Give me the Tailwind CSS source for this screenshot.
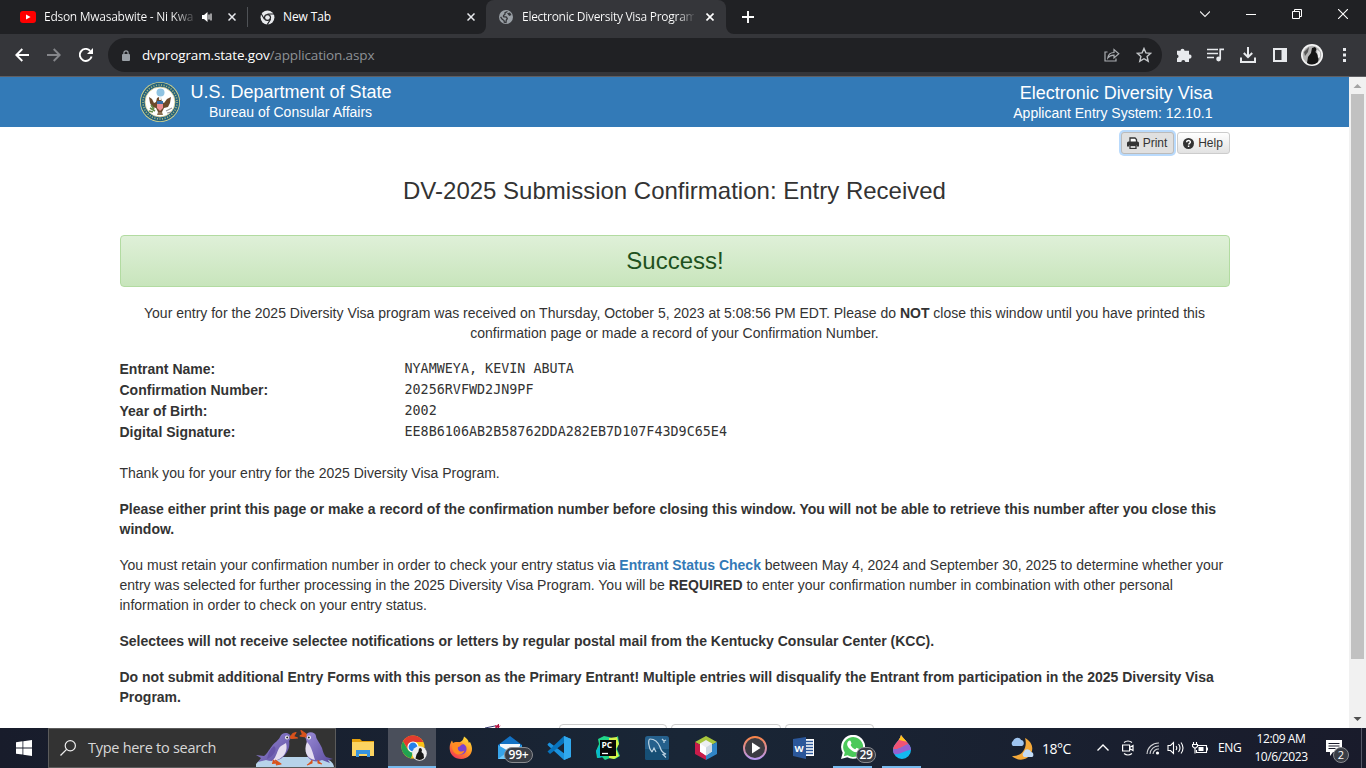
<!DOCTYPE html>
<html lang="en">
<head>
<meta charset="utf-8">
<title>Electronic Diversity Visa Program</title>
<script src="https://cdn.jsdelivr.net/npm/@tailwindcss/browser@4"></script>
</head>
<body class="w-[1366px] h-[768px] overflow-hidden flex flex-col bg-white font-['Open_Sans','Noto_Sans',sans-serif]">

<!-- Tab strip -->
<header class="h-[34px] shrink-0 bg-[#202124] flex items-start text-white text-[12px]">
  <div class="w-[247px] h-[34px] flex items-center pl-5">
    <svg class="w-4 h-3 shrink-0" viewBox="0 0 16 12"><rect width="16" height="12" rx="3" fill="#f00"/><path d="M6 3.4v5.2L10.6 6z" fill="#fff"/></svg>
    <span class="ml-2 w-[149px] whitespace-nowrap tracking-[-0.27px] leading-[34px] bg-linear-to-r from-white from-86% to-white/20 bg-clip-text text-transparent">Edson Mwasabwite - Ni Kwa</span>
    <svg class="ml-2 w-3 h-3 shrink-0" viewBox="0 0 12 12"><path d="M1 4h2l3.500-3v10L3 8H1z" fill="#fff"/><path d="M8 3.500v5M10 2.500v7" stroke="#fff" stroke-width="1.100"/></svg>
    <svg class="ml-[15px] w-2 h-2 shrink-0" viewBox="0 0 8 8"><path d="M.5.5l7 7m0-7l-7 7" stroke="#e8eaed" stroke-width="1.500"/></svg>
  </div>
  <div class="w-px h-5 mt-[7px] bg-[#4f5256]"></div>
  <div class="w-[238px] h-[34px] flex items-center pl-3">
    <svg class="w-[15px] h-[15px]" viewBox="0 0 16 16"><circle cx="8" cy="8" r="7.400" fill="#e8eaed"/><circle cx="8" cy="8" r="3.800" fill="#202124"/><circle cx="8" cy="8" r="2.500" fill="#e8eaed"/><path d="M8 4.200h7M4.700 9.900L1.300 4M11.300 9.900L7.700 15.600" stroke="#202124" stroke-width="1.200"/></svg>
    <span class="ml-2 tracking-[-0.1px]">New Tab</span>
    <svg class="ml-auto mr-[11px] w-2 h-2" viewBox="0 0 8 8"><path d="M.5.5l7 7m0-7l-7 7" stroke="#e8eaed" stroke-width="1.500"/></svg>
  </div>
  <div class="relative w-[240px] h-[34px] rounded-t-lg bg-[#35363a] flex items-center pl-[13px]">
    <svg class="absolute bottom-0 -left-2 w-2 h-2" viewBox="0 0 8 8"><path d="M8 0v8H0a8 8 0 0 0 8-8z" fill="#35363a"/></svg>
    <svg class="absolute bottom-0 -right-2 w-2 h-2" viewBox="0 0 8 8"><path d="M0 0v8h8a8 8 0 0 1-8-8z" fill="#35363a"/></svg>
    <svg class="w-[14px] h-[14px] shrink-0" viewBox="0 0 14 14"><circle cx="7" cy="7" r="7" fill="#9aa0a6"/><path d="M8.500 1.500L6 2.700v1.600L4.500 5.500v1.200l3 .5.800 1.500-1 1.300-.3 2.500-1.700-.3L5 10.500 3 9 1.600 6.800" fill="none" stroke="#35363a" stroke-width="1.300"/><path d="M8 3.200l3-.6 1.500 2.400-2.300 1z" fill="#35363a"/></svg>
    <span class="ml-[9px] w-[172px] overflow-x-clip whitespace-nowrap tracking-[-0.28px] leading-[34px] bg-linear-to-r from-white from-90% to-white/10 bg-clip-text text-transparent">Electronic Diversity Visa Program</span>
    <svg class="ml-[12px] w-2 h-2 shrink-0" viewBox="0 0 8 8"><path d="M.5.5l7 7m0-7l-7 7" stroke="#fff" stroke-width="1.600"/></svg>
  </div>
  <svg class="ml-4 mt-[11px] w-3 h-3" viewBox="0 0 12 12"><path d="M6 0v12M0 6h12" stroke="#fff" stroke-width="1.900"/></svg>
  <div class="ml-auto flex items-center h-[28px] gap-[36px] pr-[18px]">
    <svg class="w-[10px] h-[10px]" viewBox="0 0 10 10"><path d="M0 2.500l5 5 5-5" fill="none" stroke="#eee" stroke-width="1.100"/></svg>
    <svg class="w-[10px] h-[10px]" viewBox="0 0 10 10"><path d="M0 5.500h10" stroke="#fff" stroke-width="1"/></svg>
    <svg class="w-[10px] h-[10px]" viewBox="0 0 10 10"><path d="M.5 2.500h7v7h-7zM2.500 2.500v-2h7v7h-2" fill="none" stroke="#fff" stroke-width="1"/></svg>
    <svg class="w-[10px] h-[10px]" viewBox="0 0 10 10"><path d="M0 0l10 10M10 0L0 10" stroke="#fff" stroke-width="1.100"/></svg>
  </div>
</header>

<!-- Toolbar -->
<nav class="h-[43px] shrink-0 bg-[#35363a] border-b border-[#5f5f63] flex items-center">
  <svg class="ml-[15px] w-[14px] h-[14px]" viewBox="0 0 14 14"><path d="M14 7H1.500M7.300 1L1.300 7l6 6" fill="none" stroke="#fff" stroke-width="1.900"/></svg>
  <svg class="ml-[18px] w-[14px] h-[14px]" viewBox="0 0 14 14"><path d="M0 7h12.500M6.700 1l6 6-6 6" fill="none" stroke="#85868a" stroke-width="1.900"/></svg>
  <svg class="ml-[18px] w-[14px] h-[14px]" viewBox="0 0 14 14"><path d="M12.600 8.500A6 6 0 1 1 11.200 2.800" fill="none" stroke="#fff" stroke-width="1.900"/><path d="M14 0v6H8z" fill="#fff"/></svg>
  <div class="ml-[15px] w-[1054px] h-[34px] rounded-full bg-[#202124] flex items-center pl-[14px] pr-[10px]">
    <svg class="w-2 h-[11px]" viewBox="0 0 8 11"><rect y="4" width="8" height="7" rx="1" fill="#9aa0a6"/><path d="M1.900 4.500V3a2.100 2.100 0 0 1 4.200 0v1.500" fill="none" stroke="#9aa0a6" stroke-width="1.200"/></svg>
    <span class="ml-3 text-[13.500px] text-white whitespace-nowrap tracking-[-0.14px]">dvprogram.state.gov<span class="text-[#8e9196]">/application.aspx</span></span>
    <svg class="ml-auto w-[16px] h-[14px]" viewBox="0 0 16 14"><path d="M3.500 4H1v9h11v-2.500M3.800 10c.4-3.600 2.700-5.400 6.200-5.500V1.500L14.800 5.800 10 10V7.200C7 7.200 5.300 8 3.800 10z" fill="none" stroke="#aaadb1" stroke-width="1.200"/></svg>
    <svg class="ml-4 w-[16px] h-[16px]" viewBox="0 0 16 16"><path d="M8 1.500l1.900 4.400 4.800.4-3.600 3.200 1.100 4.700L8 11.700l-4.200 2.500 1.100-4.700L1.300 6.300l4.800-.4z" fill="none" stroke="#c4c7ca" stroke-width="1.400"/></svg>
  </div>
  <svg class="ml-[14px] w-4 h-4" viewBox="0 0 16 16"><path d="M1 3.800h3.500a2 2 0 1 1 4 0H13v3.700a2.100 2.100 0 1 1 0 4.100V15H9.300a2 2 0 0 0-4 0H1v-3.700a2 2 0 0 0 0-3.900z" fill="#e8eaed"/></svg>
  <svg class="ml-[15px] w-[17px] h-[14px]" viewBox="0 0 17 14"><path d="M0 1.500h11M0 5.500h11M0 9.500h7M13.200 11V1.300H17" fill="none" stroke="#e8eaed" stroke-width="1.700"/><circle cx="11.600" cy="11" r="2.400" fill="#e8eaed"/></svg>
  <svg class="ml-4 w-4 h-4" viewBox="0 0 16 16"><path d="M8 0v10M3.800 6L8 10.200 12.200 6M1 10.500V15h14v-4.500" fill="none" stroke="#e8eaed" stroke-width="2"/></svg>
  <svg class="ml-[17px] w-[14px] h-[14px]" viewBox="0 0 14 14"><path d="M0 0h14v14H0zM2 2v10h6.500V2z" fill="#e8eaed" fill-rule="evenodd"/></svg>
  <svg class="ml-[14px] w-[22px] h-[22px]" viewBox="0 0 22 22"><circle cx="11" cy="11" r="11" fill="#f4f4f4"/><circle cx="11" cy="11" r="9.300" fill="#b4b4b4"/><path d="M6 19l1-6 3-4 1-5 3-1 1.500 2-1 3 2.500 3 .5 5-1 2.500a9.300 9.300 0 0 1-10.500.5z" fill="#141414"/><path d="M3 8l5-5-1 5-3 4z" fill="#555"/><path d="M16 6l3 2v5l-2 1z" fill="#eee"/></svg>
  <svg class="ml-5 w-[3px] h-[14px]" viewBox="0 0 3 14"><path d="M0 0h3v3H0zM0 5.500h3v3H0zM0 11h3v3H0z" fill="#e8eaed"/></svg>
</nav>

<!-- Page -->
<div class="h-[651px] shrink-0 flex font-['Liberation_Sans',Arial,sans-serif] text-[14px] leading-5 text-[#333]">
  <main class="w-[1349px] h-full overflow-hidden">
    <div class="h-[50px] bg-[#337ab7] text-white flex justify-between pl-[140px] pr-[136.500px]">
      <div class="flex">
        <svg class="mt-[5px] w-10 h-10" viewBox="0 0 40 40">
          <circle cx="20" cy="20" r="20" fill="#d5d48c"/><circle cx="20" cy="20" r="19.200" fill="#23617d"/>
          <circle cx="20" cy="20" r="17" fill="none" stroke="#a9b77c" stroke-width="1.600" stroke-dasharray="1.100 1.500"/>
          <circle cx="20" cy="20" r="15" fill="#fff" stroke="#d5c98a" stroke-width=".8"/>
          <circle cx="20.500" cy="10.500" r="4" fill="#8fc3e2"/>
          <path d="M9 15l1 6 2 4 4 1 2 4h4l2-4 4-1 2-4 1-6-4 2-3 4-2-1-1-4-2-1-2 1-1 4-2 1-2-4z" fill="#6c4a2c"/>
          <path d="M10 26l5 3M9 29l4 1M11 23l3 4" stroke="#648b48" stroke-width="1.600"/><path d="M26 29l6-3M27 31l4-1" stroke="#999" stroke-width="1.200"/>
          <path d="M17 20h6v6l-3 3-3-3z" fill="#ed8d91"/><path d="M17 19h6v3h-6z" fill="#386da5"/><path d="M18 30h4l1 3h-6z" fill="#8b7050"/><path d="M19 15h2.500l-.5 3h-2z" fill="#eee"/>
        </svg>
        <div class="ml-[10.500px] w-[201px] text-center whitespace-nowrap">
          <div class="mt-[5px] text-[18px] leading-5">U.S. Department of State</div>
          <div class="-ml-px">Bureau of Consular Affairs</div>
        </div>
      </div>
      <div class="text-right mt-[6px] whitespace-nowrap">
        <div class="text-[18px] leading-5">Electronic Diversity Visa</div>
        <div>Applicant Entry System: 12.10.1</div>
      </div>
    </div>

    <div class="ml-[119.500px] w-[1110px]">
      <div class="flex justify-end gap-[3px] pt-[5px] text-[12px] leading-[18px]">
        <button class="h-[22px] w-[53px] flex items-center justify-center gap-1 rounded-[3px] border border-[#bbb] bg-[#e0e0e0] shadow-[0_0_0_2px_#b9dafc]">
          <svg class="w-3 h-3" viewBox="0 0 12 12"><path d="M3 5V1h5l1.500 1.500V5M3 8.500h6v2.800H3z" fill="#fff" stroke="#333" stroke-width="1.300"/><path d="M1.500 4.500h9A1.500 1.500 0 0 1 12 6v3.500h-2.300V8H2.300v1.500H0V6a1.500 1.500 0 0 1 1.500-1.500z" fill="#333"/></svg>Print</button>
        <button class="h-[22px] w-[53px] flex items-center justify-center gap-1 rounded-[3px] border border-[#ccc] bg-linear-to-b from-white to-[#e2e2e2]">
          <svg class="w-[11px] h-[11px]" viewBox="0 0 12 12"><circle cx="6" cy="6" r="6" fill="#333"/><path d="M4 4.500C4 2 8.200 2.200 8 4.600 7.900 5.800 6.100 5.800 6.100 7.200M6.100 8.200v1.600" fill="none" stroke="#fff" stroke-width="1.600"/></svg>Help</button>
      </div>
      <h1 class="mt-[24px] text-center text-[24px] leading-[26px]">DV-2025 Submission Confirmation: Entry Received</h1>
      <div class="mt-[31px] ml-[0.500px] mr-[-0.500px] h-[52px] rounded-[4px] border border-[#b2dba1] bg-linear-to-b from-[#dff0d8] to-[#c8e5bc] text-center text-[24px] leading-[50px] text-[#1e5120]">Success!</div>
      <p class="mt-4 text-center whitespace-nowrap">Your entry for the 2025 Diversity Visa program was received on Thursday, October 5, 2023 at 5:08:56 PM EDT. Please do <b>NOT</b> close this window until you have printed this<br>confirmation page or made a record of your Confirmation Number.</p>
      <dl class="mt-4 grid grid-cols-[285px_1fr] leading-[21px]">
        <dt class="font-bold">Entrant Name:</dt><dd class="font-['DejaVu_Sans_Mono',monospace] text-[13.400px] leading-[19px]">NYAMWEYA, KEVIN ABUTA</dd>
        <dt class="font-bold">Confirmation Number:</dt><dd class="font-['DejaVu_Sans_Mono',monospace] text-[13.400px] leading-[19px]">20256RVFWD2JN9PF</dd>
        <dt class="font-bold">Year of Birth:</dt><dd class="font-['DejaVu_Sans_Mono',monospace] text-[13.400px] leading-[19px]">2002</dd>
        <dt class="font-bold">Digital Signature:</dt><dd class="font-['DejaVu_Sans_Mono',monospace] text-[13.400px] leading-[19px]">EE8B6106AB2B58762DDA282EB7D107F43D9C65E4</dd>
      </dl>
      <div class="mt-5 flex flex-col gap-4 whitespace-nowrap">
        <p>Thank you for your entry for the 2025 Diversity Visa Program.</p>
        <p class="font-bold">Please either print this page or make a record of the confirmation number before closing this window. You will not be able to retrieve this number after you close this<br>window.</p>
        <p>You must retain your confirmation number in order to check your entry status via <b class="text-[#337ab7]">Entrant Status Check</b> between May 4, 2024 and September 30, 2025 to determine whether your<br>entry was selected for further processing in the 2025 Diversity Visa Program. You will be <b>REQUIRED</b> to enter your confirmation number in combination with other personal<br>information in order to check on your entry status.</p>
        <p class="font-bold">Selectees will not receive selectee notifications or letters by regular postal mail from the Kentucky Consular Center (KCC).</p>
        <p class="font-bold">Do not submit additional Entry Forms with this person as the Primary Entrant! Multiple entries will disqualify the Entrant from participation in the 2025 Diversity Visa<br>Program.</p>
      </div>
      <div class="mt-[17px] flex pl-[365.500px]">
        <svg class="w-[18px] h-[6px]" viewBox="0 0 18 6"><path d="M0 4l10-2" stroke="#34386b" stroke-width="1"/><path d="M10 1l2 .5L14-1v3l2-.5-2 1.500.5 2-2-1.500-2 1z" fill="#b3123f"/></svg>
        <div class="ml-[56px] flex gap-1">
          <div class="w-[108px] h-5 rounded-t-[4px] border border-[#ccc]"></div>
          <div class="w-[110px] h-5 rounded-t-[4px] border border-[#ccc]"></div>
          <div class="w-[89px] h-5 rounded-t-[4px] border border-[#ccc]"></div>
        </div>
      </div>
    </div>
  </main>
  <aside class="w-[17px] h-full bg-[#f1f1f1] flex flex-col items-center">
    <svg class="w-[17px] h-[17px]" viewBox="0 0 17 17"><path d="M4.500 11h8l-4-4z" fill="#a3a3a3"/></svg>
    <div class="w-[13px] h-[565px] bg-[#c1c1c1]"></div>
    <svg class="mt-auto w-[17px] h-[17px]" viewBox="0 0 17 17"><path d="M4.500 6h8l-4 4z" fill="#505050"/></svg>
  </aside>
</div>

<!-- Taskbar -->
<footer class="h-10 shrink-0 bg-linear-to-r from-[#181c2b] via-[#192636] to-[#191b2b] flex text-white">
  <div class="w-12 flex items-center justify-center"><svg class="w-4 h-4" viewBox="0 0 16 16"><path d="M0 2.200l6.500-.9v6.200H0zM7.300 1.200L16 0v7.500H7.300zM0 8.400h6.500v6.200L0 13.700zM7.300 8.400H16V16l-8.700-1.200z" fill="#fff"/></svg></div>
  <div class="w-[288px] h-10 bg-[#333] border border-[#5b5b5b] flex items-center pl-[11px] overflow-hidden">
    <svg class="w-4 h-4 shrink-0" viewBox="0 0 16 16"><circle cx="10.300" cy="5.700" r="5.100" fill="none" stroke="#eee" stroke-width="1.200"/><path d="M6.600 9.400L.5 15.500" stroke="#eee" stroke-width="1.300"/></svg>
    <span class="ml-3 text-[14.500px] tracking-[-0.28px] text-[#d8d8d8] whitespace-nowrap">Type here to search</span>
    <svg class="ml-auto w-[79px] h-[38px] shrink-0" viewBox="0 0 79 38">
      <defs><linearGradient id="bird" x1="0" y1="0" x2="1" y2="1"><stop offset="0" stop-color="#9a8bd6"/><stop offset="1" stop-color="#5a4b9e"/></linearGradient></defs>
      <path d="M-1 38c1-6 8-10 22-10h36c14 0 20 4 21 10z" fill="#b7d3ea"/>
      <path d="M35 9c0-6-9-7-11-1-1 3-5 5-8 9-4 5-5 8-8 10L0 26l5 3-3 4 8-2c6 2 14 1 18-4 5-5 6-11 5-15z" fill="url(#bird)"/>
      <path d="M30 14c2 7-1 14-9 17l-5 1c5-4 5-12 9-15z" fill="#e4ddf0"/><path d="M18 17c4 3 0 10-7 13 1-5 3-10 7-13z" fill="#6553a8"/><circle cx="31" cy="8.500" r="1.900" fill="#fff"/><circle cx="31.200" cy="8.500" r="1" fill="#222"/>
      <path d="M34 8l3-3.500 3-1-2.500 4 4 1.500-6 .5zM17 31l3 3-4 .5M19 31l6 4-5 1" stroke="#d9531c" stroke-width="1.100" fill="#d9531c" stroke-linejoin="round"/>
      <path d="M49 8c1-6 10-6 11-1 0 3 4 7 6 12 1 4 2 7 4 9l7 2-5 1 2 3-8-3c-6 3-13 1-15-5-2-6 1-11-1-16z" fill="url(#bird)"/>
      <path d="M51 13c5 5 6 12 8 18-8-1-12-9-8-18z" fill="#e4ddf0"/><circle cx="53" cy="8.500" r="1.900" fill="#fff"/><circle cx="52.800" cy="8.500" r="1" fill="#222"/>
      <path d="M50 8l-6-1 2.500-1.500L45 1.500 50 5zM56 31v3l-5 2M62 31v3l4 1" stroke="#d9531c" stroke-width="1.100" fill="#d9531c" stroke-linejoin="round"/>
    </svg>
  </div>
  <div class="ml-[3px] flex">
    <div class="w-[49px] flex items-center justify-center"><svg class="w-[23px] h-[20px]" viewBox="0 0 23 20"><path d="M0 1h8l2 2h12v15H0z" fill="#e6a10c"/><path d="M0 4h22v14H0z" fill="#fcd462"/><path d="M4 19v-7h14v7h-3v-3H7v3z" fill="#3794df"/></svg></div>
    <div class="w-12 bg-[#4a4f5b] border-b-2 border-[#76b9ed] flex items-center justify-center pl-[3px] pt-[2px]"><svg class="w-[26px] h-[26px]" viewBox="0 0 26 26"><circle cx="12" cy="12" r="11.500" fill="#fbc116"/><path d="M2 6.200A11.500 11.500 0 0 1 22.300 7H12L7 14.500z" fill="#e33b2e"/><path d="M2 6.200l5 8.800 5 2.500-2 5.800A11.500 11.500 0 0 1 2 6.200z" fill="#21a250"/><circle cx="12" cy="12" r="5.600" fill="#fff"/><circle cx="12" cy="12" r="4.400" fill="#2680ea"/><circle cx="18.500" cy="18.500" r="7.300" fill="#ededed"/><path d="M14.500 23.500l1-4 2-3 .5-3 2-.5 1 2-.5 2 2 2 .5 4a7 7 0 0 1-8.500.5z" fill="#181818"/></svg></div>
    <div class="w-[49px] flex items-center justify-center"><svg class="w-6 h-6" viewBox="0 0 24 24"><defs><linearGradient id="fox" x1=".8" y1="0" x2=".2" y2="1"><stop stop-color="#ffe13c"/><stop offset=".5" stop-color="#ff9426"/><stop offset="1" stop-color="#f42f58"/></linearGradient></defs><path d="M15 .5c3 2 4.500 4 4.800 6.200L21 6c2.500 5 3 9-.5 13.500-4 4.500-12.500 4.500-16.800.2C-.5 15.500 0 8.500 3 4.500L4 7l4-1C10 7 14 6 15 .5z" fill="url(#fox)"/><circle cx="12" cy="13" r="5.600" fill="#7a42cf"/><path d="M4 7c4-2 8-1 10 1.500-3 0-2 2-5 2.500-1 4 3 6 6.500 3.500-1 5-10 6-12-1C3 11 3 9 4 7z" fill="#ff8b22"/></svg></div>
    <div class="relative w-[49px] flex items-center justify-center"><svg class="w-6 h-6" viewBox="0 0 24 24"><path d="M0 9L12 0l12 9v14H0z" fill="#1271c4"/><path d="M2 8h20v14H2z" fill="#f3f7fb"/><path d="M0 9l12 7 12-7v14H0z" fill="#36a4eb"/><path d="M0 23l12-9v9z" fill="#70c9fb"/></svg><span class="absolute left-[19px] top-[19px] w-[29px] h-4 rounded-full border border-[#898b90] bg-[#393d45] text-[12px] tracking-[-0.2px] leading-[14px] font-semibold text-center">99+</span></div>
    <div class="w-[49px] flex items-center justify-center"><svg class="w-6 h-6" viewBox="0 0 24 24"><path d="M17 0l7 3v18l-7 3L1 9.500c-1-1-.5-1.500 1.500-3L18 18V6z" fill="#1b92de"/><path d="M17 0v7L3 18l-2.500-2.500z" fill="#0874bd"/><path d="M17 0l7 3v18l-7 3z" fill="#31a8ed"/></svg></div>
    <div class="w-[49px] flex items-center justify-center"><svg class="w-6 h-6" viewBox="0 0 24 24"><path d="M2 3l6-3 5 1 5 2 4-3 1 7-2 6 3 7-5 3-5-1-5 2-3-3-5 1L0 15l3-7z" fill="#21d789"/><path d="M13 2l8-1 2 7-3 5 3 7-5 3-5-1z" fill="#d6f34a"/><path d="M0 15l4-6 3 12-5 1z" fill="#08b9ce"/><path d="M4 4h16v16H4z" fill="#080808"/><path d="M6 17.500h6" stroke="#fff" stroke-width="1.300"/><text x="5.500" y="12.300" font-family="Open Sans" font-size="8.500" font-weight="700" fill="#fff">PC</text></svg></div>
    <div class="w-[49px] flex items-center justify-center"><svg class="w-6 h-6" viewBox="0 0 24 24"><rect width="24" height="24" rx="2.500" fill="#25608c"/><path d="M0 13h24v9a2 2 0 0 1-2 2H2a2 2 0 0 1-2-2z" fill="#164f75"/><path d="M7 16C3 12 3 3 5 3c4 0 8 3 10 8 1 4 3 6 6 7l-3 .5 3 3M7 16l2-4 2 4M17 3l2 2 2-1M19 5v2" fill="none" stroke="#bed5e4" stroke-width="1.200"/></svg></div>
    <div class="w-[49px] flex items-center justify-center"><svg class="w-[22px] h-6" viewBox="0 0 22 24"><path d="M11 0l11 6-11 6L0 6z" fill="#a8c63c"/><path d="M0 6l11 6v12L0 18z" fill="#c91c4a"/><path d="M22 6l-11 6v12l11-6z" fill="#3085c6"/><path d="M11 4l6 3.500v8l-6 4-6-4v-8z" fill="#eceff1"/><path d="M5 7.500l6 4v8l-6-4z" fill="#fff"/><path d="M17 7.500l-6 4v8l6-4z" fill="#ced9e2"/></svg></div>
    <div class="w-[49px] flex items-center justify-center"><svg class="w-6 h-6" viewBox="0 0 24 24"><defs><linearGradient id="ring" x2="0" y2="1"><stop stop-color="#fa8548"/><stop offset="1" stop-color="#b797ef"/></linearGradient></defs><circle cx="12" cy="12" r="11" fill="#3c3c42" stroke="url(#ring)" stroke-width="1.900"/><path d="M9 6.500l8.500 5.500L9 17.500z" fill="#fff"/></svg></div>
    <div class="w-[49px] flex items-center justify-center"><svg class="w-6 h-6" viewBox="0 0 24 24"><path d="M12 3h10v17H12z" fill="#fff"/><path d="M14 5.500h7M14 8.500h7M14 11.500h7M14 14.500h7M14 17.500h7" stroke="#2b579a" stroke-width="1.300"/><path d="M1 3l13-2v22L1 20z" fill="#2b579a"/><text x="2.500" y="15.500" font-family="Open Sans" font-size="9.500" font-weight="700" fill="#fff">W</text></svg></div>
    <div class="relative w-[49px] px-[5px] flex"><div class="w-10 border-b-2 border-[#76b9ed] flex items-center justify-center"><svg class="w-6 h-6" viewBox="0 0 24 24"><path d="M0 24l1.700-6.200A12 12 0 1 1 6.300 22.300z" fill="#fff"/><path d="M2.800 21.300l1-3.800a10 10 0 1 1 2.800 2.800z" fill="#4bc95a"/><path d="M7.500 6c1-1 2-.5 2.200.3l.8 2c.2.600-1 1.500-.8 2 1 2 2.500 3.200 4.300 4 .6.200 1.400-1.700 2-1.400l2.300 1.200c1 .5-.8 3.200-3 3.100C11 17 5 11.500 6.300 8c.2-.8.700-1.500 1.200-2z" fill="#fff"/></svg></div><span class="absolute left-[28px] top-[19px] w-5 h-4 rounded-full border border-[#898b90] bg-[#393d45] text-[12px] tracking-[-0.3px] leading-[14px] font-semibold text-center">29</span></div>
    <div class="w-[49px] px-[5px] flex"><div class="w-10 border-b-2 border-[#76b9ed] flex items-center justify-center"><svg class="w-5 h-6" viewBox="0 0 20 24"><defs><clipPath id="drop"><path d="M9 0c3 5 10 9 10 15a9 9 0 0 1-18 0C1 9 8 6 9 0z"/></clipPath></defs><g clip-path="url(#drop)"><path d="M0 0h20v24H0z" fill="#13b8f0"/><path d="M0 0h20v9C13 8 8 16 0 14z" fill="#f05276"/><path d="M5 0h7l4 7-9-2z" fill="#ffc51c"/><path d="M0 14c8 2 13-6 20-5v6c-7-1-12 6-20 4z" fill="#9561d1"/></g></svg></div></div>
  </div>
  <div class="ml-auto flex items-center text-[12px]">
    <svg class="w-6 h-[23px]" viewBox="0 0 24 23"><path d="M15 1c8 4 9 12 5 17-4 6-13 6-18 1 10 1 16-8 13-18z" fill="#f5a93a"/><path d="M3 9a3 3 0 0 1 0-5C5-.5 10 0 11 3c3 0 4 5 1 6z" fill="#9fc4ef"/><path d="M14 20a3 3 0 0 1 0-5c1-4 6-3 7 0 3 0 3 5 1 5z" fill="#c3dbf6"/></svg>
    <span class="ml-[8px] w-[30px] text-[14px] tracking-[-0.5px] whitespace-nowrap">18°C</span>
    <svg class="ml-[25px] w-3 h-3" viewBox="0 0 12 12"><path d="M.5 8.500L6 3l5.500 5.500" fill="none" stroke="#fff" stroke-width="1.400"/></svg>
    <svg class="ml-[13px] w-3 h-4" viewBox="0 0 12 16"><path d="M.6 5h7v6h-7zM7.600 7.500L11 5.500v5L7.600 8.500M2 2.500Q6-.500 10 2.500M2 13.500q4 3 8 0" fill="none" stroke="#fff" stroke-width="1.200"/></svg>
    <svg class="ml-[12px] w-[14px] h-[14px]" viewBox="0 0 14 14"><path d="M1 13A11.500 11.500 0 0 1 13 2M4 13a8.500 8.500 0 0 1 9-8M7 13a5.500 5.500 0 0 1 6-5" fill="none" stroke="#d1d2d5" stroke-width="1.100"/><circle cx="11.500" cy="12" r="1.600" fill="#fff"/></svg>
    <svg class="ml-[7px] w-[17px] h-[14px]" viewBox="0 0 17 14"><path d="M1 4.500h2.500l3-3v11l-3-3H1zM9 5q1.500 2 0 4M11.500 3q3 4 0 8M14 1.500q4 5.500 0 11" fill="none" stroke="#fff" stroke-width="1.100"/></svg>
    <svg class="ml-[8px] w-4 h-3" viewBox="0 0 16 12"><path d="M6 3.500h8.500v7H4.500V8M15.500 5.500v3M1.500 0v2.500M4.500 0v2.500M.5 2.500h5v2L3 6.500.500 4.500zM3 6v5.500" fill="none" stroke="#fff" stroke-width="1.100"/><path d="M6.500 5h5v4h-5z" fill="#fff"/></svg>
    <span class="ml-[10px] w-[24px] tracking-[-0.4px]">ENG</span>
    <div class="ml-[10px] w-[58px] text-center leading-[18px] whitespace-nowrap tracking-[-0.4px]">12:09 AM<br>10/6/2023</div>
    <div class="relative ml-[13px] w-[26px] h-10">
      <svg class="absolute left-[3px] top-[12px] w-4 h-4" viewBox="0 0 16 16"><path d="M0 0h16v12H7l-3 4v-4H0z" fill="#fff"/><path d="M2.500 3.500h11M2.500 6h11M2.500 8.500h7" stroke="#191b2b"/></svg>
      <span class="absolute left-[10px] top-[19px] w-4 h-4 rounded-full border border-[#898b90] bg-[#393d45] text-[11px] leading-[14px] text-center">2</span>
    </div>
    <div class="ml-[12px] w-px h-10 bg-[#555867]"></div><div class="w-1"></div>
  </div>
</footer>
</body>
</html>
